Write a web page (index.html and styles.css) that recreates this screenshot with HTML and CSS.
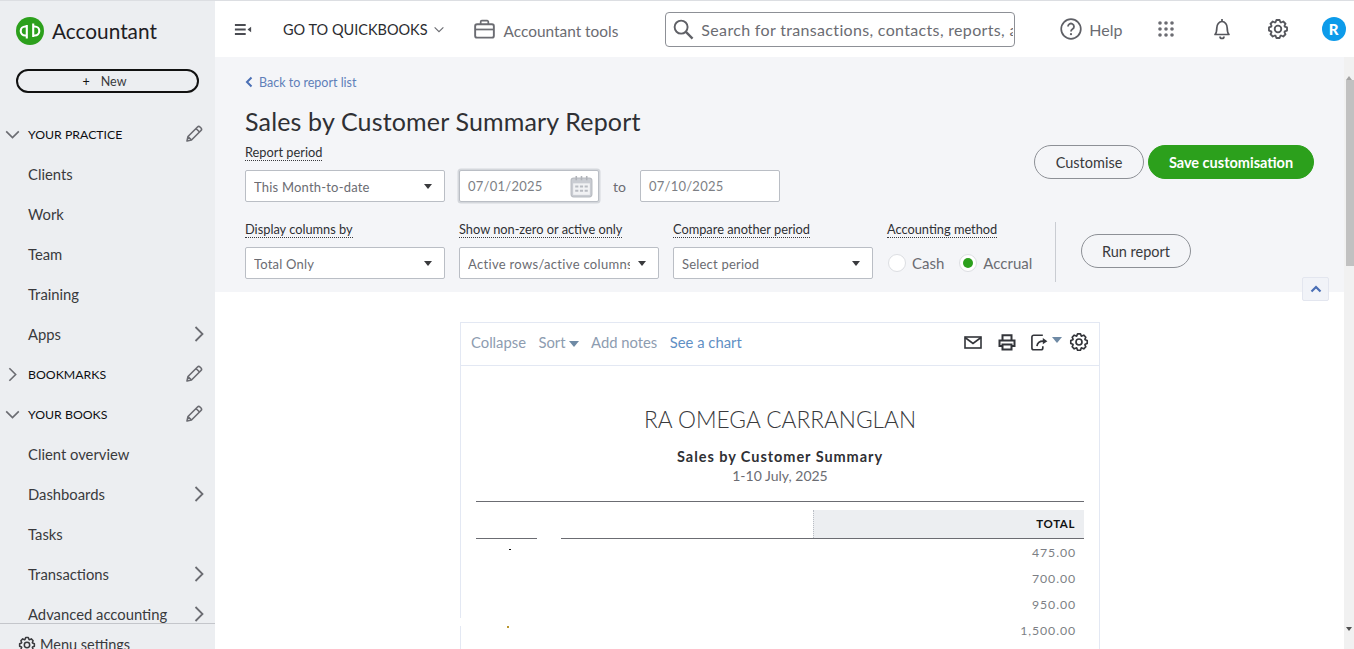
FILE: index.html
```html
<!DOCTYPE html>
<html lang="en">
<head>
  <meta charset="UTF-8">
  <title>Sales by Customer Summary Report</title>
  <link rel="stylesheet" href="styles.css">
</head>
<body>
<svg class="sprites" width="0" height="0">
  <symbol id="gear" viewBox="0 0 24 24">
    <polygon points="9.33,4.67 10.26,2.15 13.74,2.15 14.67,4.67 15.3,4.93 17.74,3.81 20.19,6.26 19.07,8.7 19.33,9.33 21.85,10.26 21.85,13.74 19.33,14.67 19.07,15.3 20.19,17.74 17.74,20.19 15.3,19.07 14.67,19.33 13.74,21.85 10.26,21.85 9.33,19.33 8.7,19.07 6.26,20.19 3.81,17.74 4.93,15.3 4.67,14.67 2.15,13.74 2.15,10.26 4.67,9.33 4.93,8.7 3.81,6.26 6.26,3.81 8.7,4.93" fill="none" stroke="currentColor" stroke-width="2" stroke-linejoin="round"/>
    <circle cx="12" cy="12" r="3.6" fill="none" stroke="currentColor" stroke-width="2"/>
  </symbol>
  <symbol id="pencil" viewBox="0 0 18 18">
    <path d="M2 16l1-4.5L12.5 2a1.8 1.8 0 0 1 2.5 0l1 1a1.8 1.8 0 0 1 0 2.5L6.5 15z M11 3.5l3.5 3.5 M3 11.5l3.5 3.5" fill="none" stroke="currentColor" stroke-width="1.6" stroke-linejoin="round"/>
  </symbol>
  <symbol id="chev-down" viewBox="0 0 16 10"><path d="M1 1.5l7 7 7-7" fill="none" stroke="currentColor" stroke-width="1.8"/></symbol>
  <symbol id="chev-right" viewBox="0 0 10 16"><path d="M1.5 1l7 7-7 7" fill="none" stroke="currentColor" stroke-width="1.8"/></symbol>
</svg>

<div class="app">
  <aside class="sidebar">
    <div class="brand">
      <svg class="brand-logo" viewBox="0 0 28 28">
        <circle cx="14" cy="14" r="14" fill="#2ca01c"/>
        <path d="M10.5 9.5H9.2a4.5 4.5 0 0 0 0 9h1.6V21.5M17.5 18.5h1.3a4.5 4.5 0 0 0 0-9h-1.6V6.5M10.8 8v11M17.2 9v11" fill="none" stroke="#fff" stroke-width="2.1"/>
      </svg>
      <span class="brand-name">Accountant</span>
    </div>
    <button class="new-btn"><span class="new-plus">+</span>New</button>
    <nav class="nav">
      <div class="nav-head"><svg class="caret-down"><use href="#chev-down"/></svg><span>YOUR PRACTICE</span><svg class="edit"><use href="#pencil"/></svg></div>
      <div class="nav-item">Clients</div>
      <div class="nav-item">Work</div>
      <div class="nav-item">Team</div>
      <div class="nav-item">Training</div>
      <div class="nav-item">Apps<svg class="more"><use href="#chev-right"/></svg></div>
      <div class="nav-head"><svg class="caret-right"><use href="#chev-right"/></svg><span>BOOKMARKS</span><svg class="edit"><use href="#pencil"/></svg></div>
      <div class="nav-head"><svg class="caret-down"><use href="#chev-down"/></svg><span>YOUR BOOKS</span><svg class="edit"><use href="#pencil"/></svg></div>
      <div class="nav-item">Client overview</div>
      <div class="nav-item">Dashboards<svg class="more"><use href="#chev-right"/></svg></div>
      <div class="nav-item">Tasks</div>
      <div class="nav-item">Transactions<svg class="more"><use href="#chev-right"/></svg></div>
      <div class="nav-item">Advanced accounting<svg class="more"><use href="#chev-right"/></svg></div>
    </nav>
    <div class="menu-settings"><svg class="menu-gear"><use href="#gear"/></svg>Menu settings</div>
  </aside>

  <div class="main">
    <header class="topbar">
      <svg class="menu-toggle" viewBox="0 0 20 14">
        <path d="M1 2h12M1 7h12M1 12h12" stroke="#4a4c52" stroke-width="2"/>
        <path d="M19 4v6l-4-3z" fill="#4a4c52"/>
      </svg>
      <div class="goto">GO TO QUICKBOOKS<svg class="goto-caret"><use href="#chev-down"/></svg></div>
      <div class="tools">
        <svg class="tools-icon" viewBox="0 0 22 20">
          <path d="M7 5V2.5A1.2 1.2 0 0 1 8.2 1.3h5.6A1.2 1.2 0 0 1 15 2.5V5" fill="none" stroke="#6b6c72" stroke-width="1.8"/>
          <rect x="1.2" y="5" width="19.6" height="14" rx="2" fill="none" stroke="#6b6c72" stroke-width="2"/>
          <path d="M1.5 10.5h19" stroke="#6b6c72" stroke-width="1.8"/>
        </svg>
        <span class="tools-text">Accountant tools</span>
      </div>
      <div class="search">
        <svg class="search-icon" viewBox="0 0 22 22">
          <circle cx="8.5" cy="8.5" r="6.8" fill="none" stroke="#5f6066" stroke-width="2"/>
          <path d="M13.5 13.5l7 7" stroke="#5f6066" stroke-width="2.4"/>
        </svg>
        <span class="search-text">Search for transactions, contacts, reports, and more</span>
      </div>
      <div class="help">
        <svg class="help-icon" viewBox="0 0 22 22">
          <circle cx="11" cy="11" r="9.8" fill="none" stroke="#5f6066" stroke-width="1.7"/>
          <path d="M8 8.6a3 3 0 1 1 4.6 2.5c-1 .7-1.6 1.2-1.6 2.4" fill="none" stroke="#5f6066" stroke-width="1.8"/>
          <circle cx="11" cy="16.2" r="1.1" fill="#5f6066"/>
        </svg>
        Help
      </div>
      <svg class="apps-icon" viewBox="0 0 16 16" fill="#6b6c72">
        <circle cx="2" cy="2" r="1.8"/><circle cx="8" cy="2" r="1.8"/><circle cx="14" cy="2" r="1.8"/>
        <circle cx="2" cy="8" r="1.8"/><circle cx="8" cy="8" r="1.8"/><circle cx="14" cy="8" r="1.8"/>
        <circle cx="2" cy="14" r="1.8"/><circle cx="8" cy="14" r="1.8"/><circle cx="14" cy="14" r="1.8"/>
      </svg>
      <svg class="bell-icon" viewBox="0 0 18 22">
        <path d="M2 16.5c1.6-1.6 1.8-3 1.8-6.5C3.8 6.5 6 3.5 9 3.5s5.2 3 5.200 6.500c0 3.500.2 4.900 1.800 6.500z" fill="none" stroke="#55565c" stroke-width="1.7" stroke-linejoin="round"/>
        <path d="M9 1v2.500M7 18.500a2 2 0 0 0 4 0" fill="none" stroke="#55565c" stroke-width="1.7"/>
      </svg>
      <svg class="top-gear"><use href="#gear"/></svg>
      <div class="avatar">R</div>
    </header>

    <div class="viewport">
      <main class="content">
        <section class="filters">
          <a class="back"><svg class="back-icon" viewBox="0 0 8 12"><path d="M6.500 1.500L2 6l4.500 4.500" fill="none" stroke="#4a6fb5" stroke-width="2"/></svg>Back to report list</a>
          <h1 class="title">Sales by Customer Summary Report</h1>

          <div class="period-row">
            <div class="period-fields">
              <span class="label">Report period</span>
              <div class="period-inputs">
                <div class="field w200"><span class="field-text">This Month-to-date</span><i class="tri"></i></div>
                <div class="field w140 focused">
                  <span class="date-text">07/01/2025</span>
                  <svg class="cal" viewBox="0 0 22 22">
                    <rect x="1" y="3" width="20" height="18" rx="2.5" fill="#c9ccd2" stroke="#b8bbc1"/>
                    <rect x="3" y="8" width="16" height="11" fill="#f1f2f4"/>
                    <path d="M6 1v4M11 1v4M16 1v4" stroke="#b0b3b9" stroke-width="1.5"/>
                    <path d="M5 10h3v2H5zM9.500 10h3v2h-3zM14 10h3v2h-3zM5 14h3v2H5zM9.500 14h3v2h-3zM14 14h3v2h-3z" fill="#b8bbc1"/>
                  </svg>
                </div>
                <span class="to">to</span>
                <div class="field w140"><span class="date-text">07/10/2025</span></div>
              </div>
            </div>
            <div class="actions">
              <button class="pill">Customise</button>
              <button class="pill pill-green">Save customisation</button>
            </div>
          </div>

          <div class="options-row">
            <div class="option w200">
              <span class="label">Display columns by</span>
              <div class="field"><span class="field-text">Total Only</span><i class="tri"></i></div>
            </div>
            <div class="option w200">
              <span class="label">Show non-zero or active only</span>
              <div class="field field-tight"><span class="field-text">Active rows/active columns</span><i class="tri"></i></div>
            </div>
            <div class="option w200">
              <span class="label">Compare another period</span>
              <div class="field"><span class="field-text">Select period</span><i class="tri"></i></div>
            </div>
            <div class="option method">
              <span class="label">Accounting method</span>
              <div class="radios">
                <span class="radio"></span><span class="radio-label">Cash</span>
                <span class="radio on"></span><span class="radio-label">Accrual</span>
              </div>
            </div>
            <div class="divider"></div>
            <button class="pill run">Run report</button>
          </div>
          <button class="collapse-btn"><svg class="collapse-icon" viewBox="0 0 12 8"><path d="M1.500 6.500L6 2l4.500 4.500" fill="none" stroke="#4a6fb5" stroke-width="2.2"/></svg></button>
        </section>

        <section class="report-wrap">
          <div class="report">
            <i class="border-gap"></i>
            <div class="report-tools">
              <span class="tool muted">Collapse</span>
              <span class="tool muted">Sort<i class="sort-tri"></i></span>
              <span class="tool muted">Add notes</span>
              <span class="tool link">See a chart</span>
              <div class="tool-icons">
                <svg class="ico-mail" viewBox="0 0 18 13">
                  <rect x="1" y="1" width="16" height="11" fill="none" stroke="#33353a" stroke-width="1.6"/>
                  <path d="M1 1.500l8 6 8-6" fill="none" stroke="#33353a" stroke-width="1.6"/>
                </svg>
                <svg class="ico-print" viewBox="0 0 18 17">
                  <path d="M4.500 6V1.200h9V6M4.500 12H1.500V6.500h15V12h-3" fill="none" stroke="#33353a" stroke-width="2"/>
                  <rect x="4.500" y="10.500" width="9" height="5" fill="none" stroke="#33353a" stroke-width="2"/>
                </svg>
                <svg class="ico-export" viewBox="0 0 22 18">
                  <path d="M13 1H3a2 2 0 0 0-2 2v12a2 2 0 0 0 2 2h8a2 2 0 0 0 2-2v-2" fill="none" stroke="#33353a" stroke-width="1.8"/>
                  <path d="M6.500 13c.5-3.500 3-5.500 7-5.500" fill="none" stroke="#33353a" stroke-width="1.8"/>
                  <path d="M13 4l5 3.500-5 3.500z" fill="#33353a"/>
                </svg>
                <i class="export-tri"></i>
                <svg class="ico-gear"><use href="#gear"/></svg>
              </div>
            </div>
            <div class="report-body">
              <div class="company">RA OMEGA CARRANGLAN</div>
              <div class="report-name">Sales by Customer Summary</div>
              <div class="report-dates">1-10 July, 2025</div>
              <div class="table-top"></div>
              <div class="table-head">
                <div class="head-blank"></div>
                <div class="head-total">TOTAL</div>
              </div>
              <div class="head-rule"><i class="rule-a"></i><i class="rule-b"></i></div>
              <div class="row"><i class="speck"></i><span class="amount">475.00</span></div>
              <div class="row"><span class="amount">700.00</span></div>
              <div class="row"><span class="amount">950.00</span></div>
              <div class="row"><i class="speck speck-gold"></i><span class="amount">1,500.00</span></div>
            </div>
          </div>
        </section>
      </main>
      <div class="scrollbar">
        <i class="sb-up"></i>
        <div class="sb-thumb"></div>
        <i class="sb-down"></i>
      </div>
    </div>
  </div>
</div>
</body>
</html>
```

FILE: styles.css
```css
* {
  box-sizing: border-box;
}

html, body {
  height: 100%;
  margin: 0;
  overflow: hidden;
}

body {
  font-family: 'Lato', 'Liberation Sans', sans-serif;
  color: #393a3d;
  background: #fff;
}

.sprites {
  display: none;
}

button {
  font-family: inherit;
  cursor: pointer;
}

.app {
  display: flex;
  height: 100vh;
  border-top: 1px solid #dcdee2;
}

/* sidebar */
.sidebar {
  flex: 0 0 215px;
  display: flex;
  flex-direction: column;
  background: #eceef1;
  overflow: hidden;
}

.brand {
  display: flex;
  align-items: center;
  height: 60px;
  padding-left: 16px;
}

.brand-logo {
  width: 28px;
  height: 28px;
  margin-right: 8px;
}

.brand-name {
  padding-bottom: 2px;
  font-size: 20.8px;
  color: #1f2024;
}

.new-btn {
  width: 183px;
  height: 24px;
  margin: 8px 0 0 16px;
  padding: 0 6px 0 0;
  background: transparent;
  border: 2px solid #111;
  border-radius: 12px;
  font-size: 12.5px;
  color: #393a3d;
}

.new-plus {
  margin-right: 11px;
  color: #111;
}

.nav {
  flex: 1;
  min-height: 0;
  margin-top: 21px;
  overflow: hidden;
}

.nav-head,
.nav-item {
  display: flex;
  align-items: center;
  height: 40px;
  font-size: 14.8px;
}

.nav-head {
  padding-left: 28px;
  position: relative;
  font-size: 12.3px;
  color: #0d0e12;
}

.nav-item {
  padding-left: 28px;
  color: #393a3d;
}

.caret-down {
  position: absolute;
  left: 5px;
  top: 16px;
  width: 15px;
  height: 9px;
  color: #6b6c72;
}

.caret-right {
  position: absolute;
  left: 8px;
  top: 13px;
  width: 9px;
  height: 15px;
  color: #6b6c72;
}

.edit {
  width: 18px;
  height: 18px;
  margin-left: auto;
  margin-right: 12px;
  color: #6b6c72;
}

.more {
  width: 10px;
  height: 16px;
  margin-left: auto;
  margin-right: 11px;
  color: #6b6c72;
}

.menu-settings {
  flex: 0 0 26px;
  min-height: 0;
  display: flex;
  align-items: flex-start;
  padding: 12px 0 0 18px;
  border-top: 1px solid #c4c6cb;
  font-size: 14.5px;
  line-height: 18px;
  color: #393a3d;
  background: #eceef1;
  overflow: hidden;
}

.menu-gear {
  width: 18px;
  height: 18px;
  margin-right: 4px;
  color: #393a3d;
}

/* top bar */
.main {
  flex: 1;
  min-width: 0;
  display: flex;
  flex-direction: column;
}

.topbar {
  flex: 0 0 56px;
  display: flex;
  align-items: center;
  background: #fff;
  padding-left: 19px;
}

.menu-toggle {
  width: 18px;
  height: 13px;
}

.goto {
  display: flex;
  align-items: center;
  margin-left: 31px;
  font-size: 14.5px;
  color: #2b2c30;
}

.goto-caret {
  width: 10px;
  height: 7px;
  margin-left: 6px;
  color: #6b6c72;
}

.tools {
  display: flex;
  align-items: center;
  margin-left: 30px;
  font-size: 15.4px;
  color: #6b6c72;
}

.tools-icon {
  width: 21px;
  height: 20px;
  margin-right: 9px;
}

.tools-text {
  padding-top: 3px;
}

.search {
  display: flex;
  align-items: center;
  width: 350px;
  height: 35px;
  margin-left: 47px;
  padding: 0 1px 0 7px;
  border: 1px solid #8d9096;
  border-radius: 4px;
  overflow: hidden;
}

.search-icon {
  flex: 0 0 21px;
  height: 21px;
  margin-right: 7px;
}

.search-text {
  white-space: nowrap;
  overflow: hidden;
  font-size: 16px;
  letter-spacing: .33px;
  color: #6b6c72;
}

.help {
  display: flex;
  align-items: center;
  margin-left: 45px;
  font-size: 16px;
  color: #6b6c72;
}

.help-icon {
  width: 22px;
  height: 22px;
  margin-right: 7px;
}

.apps-icon {
  width: 16px;
  height: 16px;
  margin-left: 35px;
}

.bell-icon {
  width: 18px;
  height: 22px;
  margin-left: 39px;
}

.top-gear {
  width: 22px;
  height: 22px;
  margin-left: 36px;
  color: #55565c;
}

.avatar {
  width: 24px;
  height: 24px;
  margin-left: 33px;
  border-radius: 50%;
  background: #0d9bea;
  color: #fff;
  font-size: 15px;
  font-weight: 900;
  line-height: 24px;
  text-align: center;
}

/* content */
.viewport {
  flex: 1;
  min-height: 0;
  display: flex;
}

.content {
  flex: 1;
  min-width: 0;
  overflow: hidden;
}

.filters {
  position: relative;
  height: 235px;
  padding: 16px 30px 0;
  background: #f4f5f8;
}

.back {
  display: flex;
  align-items: center;
  height: 18px;
  font-size: 12.5px;
  color: #5f7fb9;
}

.back-icon {
  width: 8px;
  height: 12px;
  margin-right: 6px;
}

.title {
  margin: 14px 0 0;
  font-size: 25px;
  font-weight: 400;
  letter-spacing: .16px;
  line-height: 32px;
  color: #2f3034;
}

.period-row {
  display: flex;
  justify-content: space-between;
  align-items: flex-start;
  margin-top: 4px;
}

.period-inputs {
  display: flex;
  align-items: center;
  gap: 14px;
}

.label {
  display: inline-block;
  margin-bottom: 9px;
  border-bottom: 1px dotted #393a3d;
  font-size: 12.8px;
  line-height: 15px;
  color: #2f3034;
}

.field {
  display: flex;
  align-items: center;
  height: 32px;
  padding: 0 9px 0 8px;
  background: #fff;
  border: 1px solid #babec5;
  border-radius: 2px;
  overflow: hidden;
}

.w200 {
  width: 200px;
}

.w140 {
  width: 140px;
}

.focused {
  box-shadow: 0 0 0 1.5px #d4d7dc;
}

.field-text {
  flex: 1;
  min-width: 0;
  overflow: hidden;
  white-space: nowrap;
  padding-top: 1px;
  font-size: 13px;
  letter-spacing: .2px;
  color: #6b6c72;
}

.date-text {
  flex: 1;
  font-size: 13px;
  letter-spacing: .25px;
  color: #7d7f85;
}

.cal {
  width: 23px;
  height: 23px;
  margin-right: -4px;
}

.tri {
  flex: 0 0 auto;
  width: 0;
  height: 0;
  margin: 0 3px 0 8px;
  border-left: 4.5px solid transparent;
  border-right: 4.5px solid transparent;
  border-top: 5px solid #393a3d;
}

.field-tight .field-text {
  letter-spacing: .32px;
}

.to {
  font-size: 14px;
  color: #6b6c72;
}

.actions {
  display: flex;
  gap: 4px;
  margin-top: 4px;
}

.pill {
  height: 34px;
  padding: 0;
  width: 110px;
  background: transparent;
  border: 1px solid #8d9096;
  border-radius: 17px;
  font-size: 14.5px;
  color: #393a3d;
}

.pill-green {
  width: 166px;
  background: #2ca01c;
  border-color: #2ca01c;
  color: #fff;
  font-weight: 700;
}

.options-row {
  display: flex;
  align-items: flex-start;
  gap: 14px;
  margin-top: 16px;
  position: relative;
}

.option .field {
  width: 100%;
}

.method {
  width: 154px;
}

.radios {
  display: flex;
  align-items: center;
  height: 32px;
  padding-left: 1px;
}

.radio {
  flex: 0 0 18px;
  height: 18px;
  margin-right: 6px;
  border-radius: 50%;
  background: #fff;
  border: 1px solid #dcdee2;
  display: flex;
  align-items: center;
  justify-content: center;
}

.radio.on::after {
  content: "";
  width: 10px;
  height: 10px;
  border-radius: 50%;
  background: #2ca01c;
}

.radio-label {
  margin-right: 15px;
  font-size: 15px;
  color: #6b6c72;
  white-space: nowrap;
}

.radio-label:last-child {
  margin-right: 0;
}

.divider {
  width: 1px;
  height: 60px;
  margin-top: 4px;
  background: #c9ccd2;
}

.run {
  margin: 16px 0 0 11px;
}

.collapse-btn {
  position: absolute;
  right: 15px;
  bottom: -9px;
  width: 27px;
  height: 24px;
  padding: 0;
  background: #f1f3f8;
  border: 1px solid #e3e6ef;
  border-radius: 2px;
  display: flex;
  align-items: center;
  justify-content: center;
}

.collapse-icon {
  width: 12px;
  height: 8px;
}

/* report */
.report-wrap {
  padding-top: 30px;
  padding-left: 245px;
}

.report {
  position: relative;
  width: 640px;
  height: 400px;
  border: 1px solid #e3e8f3;
  background: #fff;
}

.border-gap {
  position: absolute;
  left: -1px;
  top: 295px;
  width: 1px;
  height: 8px;
  background: #fff;
}

.report-tools {
  display: flex;
  align-items: center;
  gap: 12.5px;
  height: 43px;
  padding: 0 10px 4px;
  border-bottom: 1px solid #e3e8f3;
  font-size: 14.8px;
}

.muted {
  color: #8d9cb0;
}

.link {
  color: #5f8fc4;
}

.sort-tri {
  display: inline-block;
  margin-left: 3px;
  vertical-align: 1px;
  border-left: 5px solid transparent;
  border-right: 5px solid transparent;
  border-top: 6px solid #6f8aa5;
}

.tool-icons {
  display: flex;
  align-items: center;
  margin-left: auto;
}

.ico-mail {
  width: 18px;
  height: 13px;
}

.ico-print {
  width: 18px;
  height: 17px;
  margin-left: 16px;
}

.ico-export {
  width: 20px;
  height: 17px;
  margin-left: 15px;
}

.export-tri {
  margin: -5px 0 0 1px;
  border-left: 5px solid transparent;
  border-right: 5px solid transparent;
  border-top: 6px solid #6f8aa5;
}

.ico-gear {
  width: 20px;
  height: 20px;
  margin-left: 7px;
  color: #33353a;
}

.report-body {
  padding: 0 15px;
}

.company {
  margin-top: 39px;
  font-size: 22.7px;
  font-weight: 300;
  line-height: 30px;
  text-align: center;
  color: #393a3d;
}

.report-name {
  margin-top: 13px;
  font-size: 14.5px;
  font-weight: 700;
  letter-spacing: .95px;
  line-height: 18px;
  text-align: center;
  color: #2f3034;
}

.report-dates {
  font-size: 14px;
  line-height: 20px;
  text-align: center;
  color: #6b6c72;
}

.table-top {
  margin-top: 15px;
  border-top: 1px solid #6b6c72;
}

.table-head {
  display: flex;
  height: 28px;
  margin-top: 8px;
}

.head-blank {
  flex: 1;
}

.head-total {
  width: 271px;
  padding-right: 9px;
  background: #eceef1;
  border-left: 1px dotted #babec5;
  font-size: 11.5px;
  font-weight: 700;
  letter-spacing: .6px;
  line-height: 28px;
  text-align: right;
  color: #111;
}

.head-rule {
  display: flex;
  gap: 24px;
  height: 1px;
}

.rule-a {
  width: 61px;
  background: #6b6c72;
}

.rule-b {
  flex: 1;
  background: #6b6c72;
}

.row {
  display: flex;
  align-items: center;
  height: 26px;
  padding-right: 8px;
  font-size: 12.3px;
  letter-spacing: .9px;
  color: #7d7f85;
}

.amount {
  margin-left: auto;
}

.speck {
  width: 2px;
  height: 1px;
  margin-left: 33px;
  margin-bottom: 5px;
  background: #111;
}

.speck-gold {
  width: 2px;
  height: 2px;
  background: #b9962e;
  margin-left: 31px;
  margin-bottom: 7px;
}

/* fake window scrollbar */
.scrollbar {
  flex: 0 0 10px;
  display: flex;
  flex-direction: column;
  align-items: center;
  background: #f1f1f1;
}

.sb-up,
.sb-down {
  flex: 0 0 17px;
  width: 0;
  height: 0;
  margin-top: 6px;
  border-left: 3px solid transparent;
  border-right: 3px solid transparent;
  border-bottom: 4px solid #a3a3a3;
}

.sb-down {
  margin-top: auto;
  margin-bottom: 5px;
  border-bottom: 0;
  border-top: 4px solid #505050;
}

.sb-thumb {
  align-self: flex-end;
  width: 8px;
  height: 186px;
  background: #c1c1c1;
}
```
